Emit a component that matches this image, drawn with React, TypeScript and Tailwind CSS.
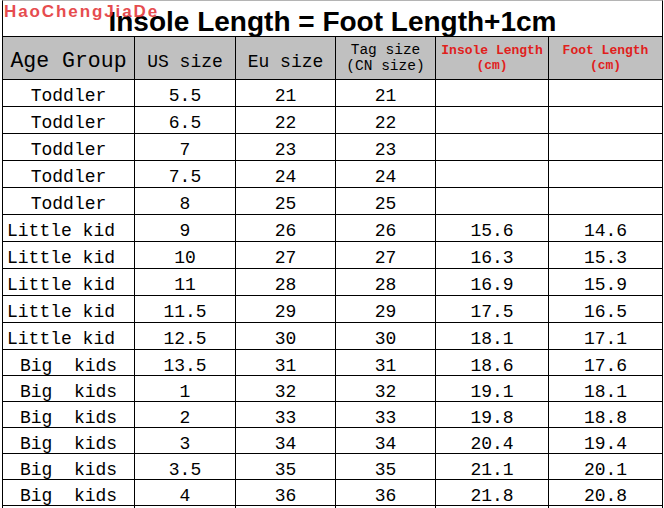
const rows: [string, string, string, string, string, string][] = [
  ["Toddler", "5.5", "21", "21", "", ""],
  ["Toddler", "6.5", "22", "22", "", ""],
  ["Toddler", "7", "23", "23", "", ""],
  ["Toddler", "7.5", "24", "24", "", ""],
  ["Toddler", "8", "25", "25", "", ""],
  ["Little kid", "9", "26", "26", "15.6", "14.6"],
  ["Little kid", "10", "27", "27", "16.3", "15.3"],
  ["Little kid", "11", "28", "28", "16.9", "15.9"],
  ["Little kid", "11.5", "29", "29", "17.5", "16.5"],
  ["Little kid", "12.5", "30", "30", "18.1", "17.1"],
  ["Big  kids", "13.5", "31", "31", "18.6", "17.6"],
  ["Big  kids", "1", "32", "32", "19.1", "18.1"],
  ["Big  kids", "2", "33", "33", "19.8", "18.8"],
  ["Big  kids", "3", "34", "34", "20.4", "19.4"],
  ["Big  kids", "3.5", "35", "35", "21.1", "20.1"],
  ["Big  kids", "4", "36", "36", "21.8", "20.8"],
  ["", "", "", "", "", ""],
];

const mono = "font-['Liberation_Mono',monospace]";

export default function App() {
  return (
    <div className="w-[664px] h-[508px] overflow-hidden bg-white">
      <div
        className={`ml-[2px] w-fit grid grid-cols-[131px_100px_99px_99px_112px_113px] grid-rows-[35px_42px_repeat(10,26px)_repeat(6,25px)_26px] gap-px bg-black border border-black border-t-[#b4b4b4] ${mono} text-black`}
      >
        {/* title, with the shop watermark lying over it */}
        <div className="col-span-6 relative bg-white flex justify-center items-start pt-[7px]">
          <span className="font-['Liberation_Sans',Arial,sans-serif] font-bold text-[28px] leading-none">
            Insole Length = Foot Length+1cm
          </span>
          <span className="absolute left-[1px] top-[2px] font-['Liberation_Sans',Arial,sans-serif] font-bold text-[17px] leading-none tracking-[1.9px] text-[#e4393c] opacity-90">
            HaoChengJiaDe
          </span>
        </div>

        {/* header */}
        <div className="bg-[#c0c0c0] flex justify-center items-center pt-[8px] text-[21.5px] leading-none">
          Age Group
        </div>
        <div className="bg-[#c0c0c0] flex justify-center items-center pt-[7px] text-[18px] leading-none">
          US size
        </div>
        <div className="bg-[#c0c0c0] flex justify-center items-center pt-[7px] text-[18px] leading-none">
          Eu size
        </div>
        <div className="bg-[#c0c0c0] flex flex-col justify-center items-center text-[14.5px] leading-[16px]">
          <span>Tag size</span>
          <span>(CN size)</span>
        </div>
        <div className="bg-[#c0c0c0] flex flex-col justify-center items-center text-[13px] leading-[15px] font-bold text-[#e0201c]">
          <span>Insole Length</span>
          <span>(cm)</span>
        </div>
        <div className="bg-[#c0c0c0] flex flex-col justify-center items-center text-[13px] leading-[15px] font-bold text-[#e0201c]">
          <span>Foot Length</span>
          <span>(cm)</span>
        </div>

        {/* data rows */}
        {rows.map((r, i) =>
          r.map((cell, j) => (
            <div
              key={`${i}-${j}`}
              className={`bg-white flex items-center pt-[6px] text-[18px] leading-none whitespace-pre ${
                cell === "Little kid" ? "justify-start pl-[4px]" : "justify-center"
              }`}
            >
              {cell}
            </div>
          ))
        )}
      </div>
    </div>
  );
}
